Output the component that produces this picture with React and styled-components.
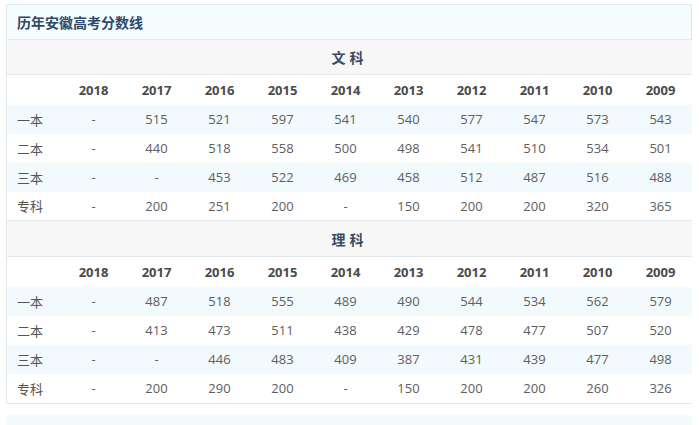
import React from 'react';
import styled, { createGlobalStyle } from 'styled-components';

const GlobalStyle = createGlobalStyle`
  body {
    margin: 0;
    background: #ffffff;
    font-family: "Open Sans", "Noto Sans CJK SC", sans-serif;
  }
`;

const Page = styled.div`
  padding: 4px 6px 0 6px;
  width: 686px;
`;

const Box = styled.div`
  border: 1px solid #e2e9ec;
  box-sizing: border-box;
`;

const TitleBar = styled.div`
  height: 34px;
  display: flex;
  align-items: center;
  padding-left: 10px;
  background: #f5fcfd;
  border-bottom: 1px solid #e2e9ec;
  color: #2f4a68;
  font-size: 14px;
  font-weight: 700;
  font-family: "Noto Sans CJK SC", sans-serif;
`;

const Table = styled.table`
  width: 100%;
  border-collapse: collapse;
  table-layout: fixed;
`;

const SectionCell = styled.td`
  height: ${(p) => (p.$top ? 35 : 34)}px;
  padding: 0;
  background: #f7f7f7;
  text-align: center;
  color: #3a4b60;
  font-size: 14px;
  font-weight: 700;
  letter-spacing: 4px;
  font-family: "Noto Sans CJK SC", sans-serif;
  border-top: ${(p) => (p.$top ? '1px solid #e2e9ec' : 'none')};
  border-bottom: 1px solid #e2e9ec;
`;

const Row = styled.tr`
  height: ${(p) => p.$h}px;
  background: ${(p) => (p.$alt ? '#f2fafd' : '#ffffff')};
`;

const Label = styled.td`
  padding: 0 0 0 10px;
  text-align: left;
  color: #555;
  font-size: 13px;
  font-family: "Noto Sans CJK SC", sans-serif;
`;

const Cell = styled.td`
  padding: 0;
  text-align: center;
  color: ${(p) => (p.$head ? '#4a4a4a' : '#5e5e5e')};
  font-size: 13px;
  font-weight: ${(p) => (p.$head ? 700 : 400)};
`;

const Strip = styled.div`
  margin-top: 11px;
  height: 11px;
  background: #f3fbfd;
`;

const years = ['2018', '2017', '2016', '2015', '2014', '2013', '2012', '2011', '2010', '2009'];

const sections = [
  {
    name: '文科',
    rows: [
      ['一本', '-', '515', '521', '597', '541', '540', '577', '547', '573', '543'],
      ['二本', '-', '440', '518', '558', '500', '498', '541', '510', '534', '501'],
      ['三本', '-', '-', '453', '522', '469', '458', '512', '487', '516', '488'],
      ['专科', '-', '200', '251', '200', '-', '150', '200', '200', '320', '365'],
    ],
  },
  {
    name: '理科',
    rows: [
      ['一本', '-', '487', '518', '555', '489', '490', '544', '534', '562', '579'],
      ['二本', '-', '413', '473', '511', '438', '429', '478', '477', '507', '520'],
      ['三本', '-', '-', '446', '483', '409', '387', '431', '439', '477', '498'],
      ['专科', '-', '200', '290', '200', '-', '150', '200', '200', '260', '326'],
    ],
  },
];

export default function App() {
  return (
    <Page>
      <GlobalStyle />
      <Box>
        <TitleBar>历年安徽高考分数线</TitleBar>
        <Table>
          <colgroup>
            <col style={{ width: 55 }} />
            {years.map((y) => (
              <col key={y} style={{ width: 63 }} />
            ))}
          </colgroup>
          <tbody>
            {sections.map((s, si) => (
              <React.Fragment key={s.name}>
                <tr>
                  <SectionCell colSpan={11} $top={si > 0}>
                    {s.name}
                  </SectionCell>
                </tr>
                <Row $h={30}>
                  <Label />
                  {years.map((y) => (
                    <Cell key={y} $head>
                      {y}
                    </Cell>
                  ))}
                </Row>
                {s.rows.map((r, ri) => (
                  <Row key={r[0]} $h={29} $alt={ri % 2 === 0}>
                    <Label>{r[0]}</Label>
                    {r.slice(1).map((v, vi) => (
                      <Cell key={vi}>{v}</Cell>
                    ))}
                  </Row>
                ))}
              </React.Fragment>
            ))}
          </tbody>
        </Table>
      </Box>
      <Strip />
    </Page>
  );
}
